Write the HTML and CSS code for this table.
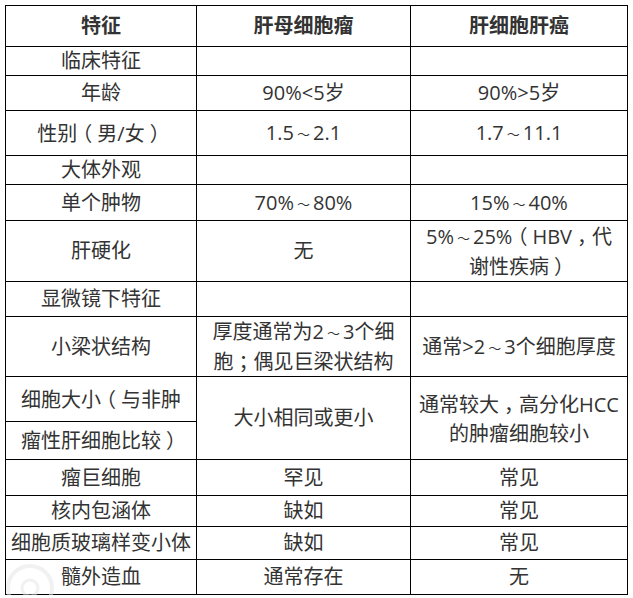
FILE: index.html
```html
<!DOCTYPE html>
<html lang="zh">
<head>
<meta charset="utf-8">
<title>肝母细胞瘤与肝细胞肝癌</title>
<link rel="stylesheet" href="styles.css">
</head>
<body>
<table class="grid">
  <colgroup>
    <col class="col-a">
    <col class="col-b">
    <col class="col-c">
  </colgroup>
  <thead>
    <tr class="h41"><th>特征</th><th>肝母细胞瘤</th><th>肝细胞肝癌</th></tr>
  </thead>
  <tbody>
    <tr class="h29"><td>临床特征</td><td></td><td></td></tr>
    <tr class="h35"><td>年龄</td><td>90%&lt;5岁</td><td>90%&gt;5岁</td></tr>
    <tr class="h45"><td>性别<span class="pu">（</span>男/女<span class="pu">）</span></td><td>1.5<span class="tl">～</span>2.1</td><td>1.7<span class="tl">～</span>11.1</td></tr>
    <tr class="h29"><td>大体外观</td><td></td><td></td></tr>
    <tr class="h36"><td>单个肿物</td><td>70%<span class="tl">～</span>80%</td><td>15%<span class="tl">～</span>40%</td></tr>
    <tr class="h61"><td>肝硬化</td><td>无</td><td class="two">5%<span class="tl">～</span>25%<span class="pu">（</span>HBV<span class="pu">，</span>代<br>谢性疾病<span class="pu">）</span></td></tr>
    <tr class="h35"><td>显微镜下特征</td><td></td><td></td></tr>
    <tr class="h58"><td>小梁状结构</td><td class="two">厚度通常为2<span class="tl">～</span>3个细<br>胞<span class="pu">；</span>偶见巨梁状结构</td><td>通常&gt;2<span class="tl">～</span>3个细胞厚度</td></tr>
    <tr class="h45"><td>细胞大小<span class="pu">（</span>与非肿</td><td rowspan="2">大小相同或更小</td><td rowspan="2" class="two">通常较大<span class="pu">，</span>高分化HCC<br>的肿瘤细胞较小</td></tr>
    <tr class="h38"><td>瘤性肝细胞比较<span class="pu">）</span></td></tr>
    <tr class="h36"><td>瘤巨细胞</td><td>罕见</td><td>常见</td></tr>
    <tr class="h31"><td>核内包涵体</td><td>缺如</td><td>常见</td></tr>
    <tr class="h33"><td>细胞质玻璃样变小体</td><td>缺如</td><td>常见</td></tr>
    <tr class="h35"><td>髓外造血</td><td>通常存在</td><td>无</td></tr>
  </tbody>
</table>
<svg class="mark" width="80" height="50" viewBox="0 0 80 50" aria-hidden="true">
  <circle cx="30" cy="40" r="22" fill="none" stroke="#e6e6e6" stroke-opacity="0.55" stroke-width="4"/>
  <circle cx="30" cy="40" r="8" fill="none" stroke="#e6e6e6" stroke-opacity="0.55" stroke-width="3"/>
</svg>
</body>
</html>
```

FILE: styles.css
```css
html, body {
  margin: 0;
  padding: 0;
  background: #ffffff;
}
body {
  position: relative;
  padding: 5px 0 0 5px;
  font-family: "Open Sans", "Noto Sans CJK SC", sans-serif;
  font-size: 20px;
  color: #333333;
}
.grid {
  border-collapse: collapse;
  table-layout: fixed;
  width: 622px;
}
.col-a { width: 191px; }
.col-b { width: 214px; }
.col-c { width: 217px; }
.grid th,
.grid td {
  border: 1px solid #000000;
  padding: 0;
  text-align: center;
  vertical-align: middle;
  line-height: 22px;
  white-space: nowrap;
}
.grid th {
  font-weight: bold;
}
.grid td.two {
  line-height: 29px;
}
.tl {
  display: inline-block;
  font-size: 13px;
  line-height: 1;
  margin: 0 3px;
  vertical-align: 1px;
}
.pu {
  font-family: "Noto Sans CJK SC", sans-serif;
  font-feature-settings: "halt" 1;
  margin: 0 5px;
}
.h29 td, .h29 th { height: 28px; }
.h31 td { height: 30px; }
.h33 td { height: 32px; }
.h35 td { height: 34px; }
.h36 td { height: 35px; }
.h38 td { height: 37px; }
.h41 th { height: 40px; }
.h45 td { height: 44px; }
.h58 td { height: 57px; }
.h61 td { height: 60px; }
.mark {
  position: absolute;
  left: 0;
  top: 548px;
  pointer-events: none;
}
```
